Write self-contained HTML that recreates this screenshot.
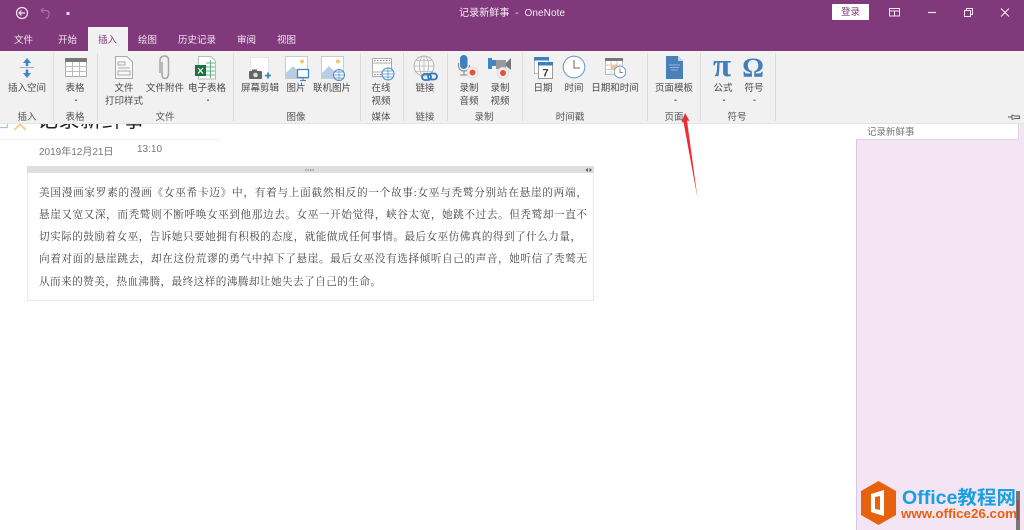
<!DOCTYPE html>
<html><head><meta charset="utf-8"><style>
html,body{margin:0;padding:0;width:1024px;height:530px;overflow:hidden;background:#fff}
body{position:relative;font-family:"Liberation Sans","Noto Sans CJK SC",sans-serif;font-size:9.5px;color:#444;filter:blur(.3px)}
div{position:absolute;white-space:nowrap}
.c{transform:translateX(-50%);line-height:13px;color:#4a4a4a;text-align:center}
.t{top:35px;line-height:12px;color:#f3e6f1}
.s{width:1px;top:53px;height:68px;background:#dcdcdc}
.g{top:112px;color:#555;line-height:12px}
.l{left:39px;width:548px;font-family:"Liberation Serif","Noto Serif CJK SC",serif;font-size:10.6px;line-height:14px;color:#444;text-align:justify;text-align-last:justify;white-space:normal;height:14px}
svg{position:absolute;left:0;top:0}
</style></head><body>

<div style="left:0;top:124px;width:856px;height:406px;background:#fff"></div>
<div style="left:37px;top:106px;font-size:21px;line-height:30px;color:#222;letter-spacing:.6px">记录新鲜事</div>
<div style="left:0;top:139px;width:220px;height:1px;background:#f0f0f0"></div>
<div style="left:39px;top:147px;font-size:10px;line-height:12px;color:#777">2019年12月21日</div>
<div style="left:137px;top:144px;font-size:10px;line-height:12px;color:#777">13:10</div>

<div style="left:27px;top:166px;width:565px;height:134px;border:1px solid #e8e8e8;border-top:0;background:#fff"></div>
<div style="left:27px;top:166px;width:567px;height:7px;background:#dedede"></div>
<div class="l" style="top:187px">美国漫画家罗素的漫画《女巫希卡迈》中，有着与上面截然相反的一个故事:女巫与秃鹫分别站在悬崖的两端，</div>
<div class="l" style="top:209px">悬崖又宽又深，而秃鹫则不断呼唤女巫到他那边去。女巫一开始觉得，峡谷太宽，她跳不过去。但秃鹫却一直不</div>
<div class="l" style="top:231px;width:542px">切实际的鼓励着女巫，告诉她只要她拥有积极的态度，就能做成任何事情。最后女巫仿佛真的得到了什么力量，</div>
<div class="l" style="top:253px">向着对面的悬崖跳去，却在这份荒谬的勇气中掉下了悬崖。最后女巫没有选择倾听自己的声音，她听信了秃鹫无</div>
<div class="l" style="top:276px;width:342px">从而来的赞美，热血沸腾，最终这样的沸腾却让她失去了自己的生命。</div>

<div style="left:856px;top:124px;width:168px;height:406px;background:#f3e5f3"></div>
<div style="left:856px;top:140px;width:1px;height:390px;background:#dcc5e0"></div>
<div style="left:856px;top:124px;width:163px;height:16px;background:#fff;border-bottom:1px solid #e6d3e8;border-right:1px solid #e6d3e8;box-sizing:border-box"></div>
<div style="left:867px;top:127px;line-height:12px;color:#777">记录新鲜事</div>

<div style="left:0;top:0;width:1024px;height:51px;background:#80397b"></div>
<div style="left:0;top:51px;width:1024px;height:72px;background:#f1f1f1"></div>
<div style="left:0;top:123px;width:1024px;height:1px;background:#e4e4e4"></div>
<div style="left:88px;top:27px;width:40px;height:24px;background:#f1f1f1"></div>

<div style="left:459px;top:7px;line-height:13px;font-size:10px;color:#f5ecf4;letter-spacing:.1px">记录新鲜事&nbsp; - &nbsp;OneNote</div>
<div style="left:832px;top:4px;width:37px;height:16px;background:#fff;border-radius:1px;text-align:center;line-height:18px;color:#80397b">登录</div>

<div class="t" style="left:14px">文件</div>
<div class="t" style="left:58px">开始</div>
<div class="t" style="left:98px;color:#80397b">插入</div>
<div class="t" style="left:138px">绘图</div>
<div class="t" style="left:178px">历史记录</div>
<div class="t" style="left:237px">审阅</div>
<div class="t" style="left:277px">视图</div>

<div class="s" style="left:53px"></div><div class="s" style="left:97px"></div><div class="s" style="left:233px"></div><div class="s" style="left:360px"></div><div class="s" style="left:403px"></div><div class="s" style="left:447px"></div><div class="s" style="left:522px"></div><div class="s" style="left:647px"></div><div class="s" style="left:700px"></div><div class="s" style="left:775px"></div>

<div class="c" style="left:27px;top:82px">插入空间</div>
<div class="c" style="left:75px;top:82px">表格</div>
<div class="c" style="left:124px;top:82px">文件<br>打印样式</div>
<div class="c" style="left:165px;top:82px">文件附件</div>
<div class="c" style="left:207px;top:82px">电子表格</div>
<div class="c" style="left:260px;top:82px">屏幕剪辑</div>
<div class="c" style="left:296px;top:82px">图片</div>
<div class="c" style="left:332px;top:82px">联机图片</div>
<div class="c" style="left:381px;top:82px">在线<br>视频</div>
<div class="c" style="left:425px;top:82px">链接</div>
<div class="c" style="left:469px;top:82px">录制<br>音频</div>
<div class="c" style="left:500px;top:82px">录制<br>视频</div>
<div class="c" style="left:543px;top:82px">日期</div>
<div class="c" style="left:574px;top:82px">时间</div>
<div class="c" style="left:615px;top:82px">日期和时间</div>
<div class="c" style="left:674px;top:82px">页面模板</div>
<div class="c" style="left:723px;top:82px">公式</div>
<div class="c" style="left:754px;top:82px">符号</div>

<div class="c g" style="left:27px">插入</div>
<div class="c g" style="left:75px">表格</div>
<div class="c g" style="left:165px">文件</div>
<div class="c g" style="left:296px">图像</div>
<div class="c g" style="left:381px">媒体</div>
<div class="c g" style="left:425px">链接</div>
<div class="c g" style="left:484px">录制</div>
<div class="c g" style="left:570px">时间戳</div>
<div class="c g" style="left:674px">页面</div>
<div class="c g" style="left:737px">符号</div>

<svg width="1024" height="530" viewBox="0 0 1024 530" fill="none">
<!-- title bar -->
<circle cx="22" cy="13" r="5.5" stroke="#f3e6f1" stroke-width="1.2"/>
<path d="M25 13H19M21.5 10.5L19 13L21.5 15.5" stroke="#f3e6f1" stroke-width="1.2"/>
<path d="M41 10.5H46Q50 11 49 15T45.5 18M41 10.5L43.5 8M41 10.5L43.5 13" stroke="#a673a2" stroke-width="1.2"/>
<rect x="66.5" y="12" width="3" height="3" fill="#ecdcea"/>
<rect x="889.5" y="8.5" width="10" height="7.5" stroke="#f3e6f1"/><path d="M889 11H900M894.5 11V16" stroke="#f3e6f1"/>
<path d="M928 12.5H936" stroke="#f3e6f1" stroke-width="1.2"/>
<rect x="964.5" y="10.5" width="6" height="6" stroke="#f3e6f1"/><path d="M966.5 10V8.5H972.5V14.5H971" stroke="#f3e6f1"/>
<path d="M1001 8.5L1009 16.5M1009 8.5L1001 16.5" stroke="#f3e6f1" stroke-width="1.1"/>

<!-- insert space -->
<path d="M27 58L31 63H28.3V66H25.7V63H23Z" fill="#3f86c6"/><path d="M20 67.5H34" stroke="#aaa"/><path d="M27 78L31 73H28.3V69.5H25.7V73H23Z" fill="#3f86c6"/>
<!-- table -->
<rect x="65.5" y="58.5" width="21" height="18" fill="#fff" stroke="#aaa"/><rect x="65" y="58" width="22" height="4" fill="#777"/>
<path d="M65 66.5H87M65 71.5H87M72.5 62V77M79.5 62V77" stroke="#bbb"/>
<!-- printout -->
<path d="M115.5 56.5H127L132.5 62V78.5H115.5Z" fill="#f8f8f8" stroke="#aaa"/><path d="M118 62H125V65H118ZM118 68H130M118 71H130V75H118Z" stroke="#aaa"/>
<!-- clip -->
<path d="M162 62V74Q162 78.500 165 78.500T168.500 74V60Q168.500 56 164.500 56T160 60V73" stroke="#a6a6a6" stroke-width="1.500"/>
<!-- excel -->
<path d="M198.5 56.5H211L215.5 61V79H198.5Z" fill="#fff" stroke="#bbb"/><path d="M206 63H215M206 67H215M206 71H215M206 75H215M210.5 60V78" stroke="#5fb57f"/>
<rect x="195" y="65" width="11" height="11" fill="#1d7044"/><path d="M198 68L203 73.5M203 68L198 73.5" stroke="#fff" stroke-width="1.2"/>
<!-- screen clip -->
<rect x="250.500" y="57.500" width="18" height="18" fill="#fff" stroke="#e6e6e6"/>
<rect x="249" y="71" width="13" height="8" rx="1" fill="#666"/><rect x="252" y="69.500" width="5" height="2" fill="#666"/><circle cx="255.500" cy="75" r="2.300" fill="#ddd"/>
<path d="M268 72.500V78.500M265 75.500H271" stroke="#3f86c6" stroke-width="1.800"/>
<!-- picture -->
<rect x="285.500" y="56.500" width="22" height="22" fill="#fff" stroke="#ccc"/><path d="M286 78V73L293 66L299 72L302 70V78Z" fill="#b7cfe5"/><circle cx="302" cy="61.500" r="2" fill="#f2c777"/>
<rect x="297.500" y="69.500" width="11" height="8" fill="#fff" stroke="#3f86c6" stroke-width="1.300"/><path d="M303 78V80.500M300 80.500H306" stroke="#3f86c6"/>
<!-- online picture -->
<rect x="321.500" y="56.500" width="22" height="22" fill="#fff" stroke="#ccc"/><path d="M322 78V73L329 66L335 72L338 70V78Z" fill="#b7cfe5"/><circle cx="338" cy="61.500" r="2" fill="#f2c777"/>
<circle cx="339" cy="75" r="5.500" fill="#fff" stroke="#4a8cc7"/><path d="M333.500 75H344.500M339 69.500V80.500M334.500 72H343.500M334.500 78H343.500" stroke="#4a8cc7" stroke-width=".7"/>
<!-- video online -->
<rect x="372.500" y="58.500" width="19" height="18" fill="#fff" stroke="#aaa"/><path d="M372 63H392M372 72H392" stroke="#aaa"/><path d="M374 60.500H390M374 74.500H384" stroke="#888" stroke-dasharray="1.500 1.500"/>
<circle cx="388" cy="74" r="6" fill="#fff" stroke="#4a8cc7"/><path d="M382 74H394M388 68V80M383 71H393M383 77H393" stroke="#4a8cc7" stroke-width=".7"/>
<!-- link -->
<circle cx="424" cy="66" r="10" fill="#f8f8f8" stroke="#b5b5b5"/><path d="M414 66H434M424 56V76M416 60.500H432M416 71.500H432" stroke="#b5b5b5" stroke-width=".8"/><ellipse cx="424" cy="66" rx="4.500" ry="10" stroke="#b5b5b5" stroke-width=".8"/>
<rect x="422" y="74" width="9" height="6" rx="3" stroke="#2f78bd" stroke-width="1.800"/><rect x="428" y="73.500" width="9" height="6" rx="3" stroke="#2f78bd" stroke-width="1.800"/>
<!-- mic -->
<rect x="460" y="55" width="7.500" height="14" rx="3.700" fill="#3f7fbb"/><path d="M458.500 63V65Q458.500 71 464 71T469.500 65M464 71V74.500M460 75H468" stroke="#888" stroke-width="1.100"/>
<circle cx="472.500" cy="72.500" r="5.500" fill="#f4f4f4" stroke="#ddd"/><circle cx="472.500" cy="72.500" r="3" fill="#e0532f"/>
<!-- cam -->
<path d="M488 58H492V60H504V66H492V69H488Z" fill="#3f86c6"/><path d="M496 60H506V69H496Z" fill="#9a9a9a"/><path d="M506 63L511 58V70L506 66Z" fill="#777"/>
<circle cx="503" cy="73" r="5.500" fill="#f4f4f4" stroke="#ddd"/><circle cx="503" cy="73" r="3" fill="#e0532f"/>
<!-- date -->
<rect x="534.500" y="57.500" width="14" height="16" fill="#fff" stroke="#bbb"/><rect x="534" y="57" width="15" height="3.500" fill="#3f7fbb"/>
<rect x="538.500" y="62.500" width="14" height="16" fill="#fff" stroke="#999"/><rect x="538" y="62" width="15" height="3.500" fill="#3f7fbb"/>
<text x="545.500" y="76.500" font-family="Liberation Sans,sans-serif" font-size="11" font-weight="bold" fill="#444" text-anchor="middle">7</text>
<!-- clock -->
<circle cx="574" cy="67" r="10.800" fill="#fff" stroke="#6f9fcc" stroke-width="1.100"/><path d="M574 60V68H580" stroke="#666" stroke-width="1"/>
<!-- datetime -->
<rect x="605.500" y="58.500" width="17" height="16" fill="#fff" stroke="#bbb"/><rect x="605" y="58" width="18" height="3" fill="#777"/><path d="M605 65H623M605 69.500H623M611 61V75M617 61V75" stroke="#ccc"/><rect x="611" y="65" width="6" height="4.500" fill="#f2c38f"/>
<circle cx="620" cy="72" r="5.800" fill="#fff" stroke="#6f9fcc"/><path d="M620 68.500V72.500H623" stroke="#666" stroke-width=".8"/>
<!-- page template -->
<path d="M666 56H678L683 61V79H666Z" fill="#4a80b8"/><path d="M678 56V61H683Z" fill="#bcd2e8"/><path d="M669 65H680M670 67.500H679M671 70H678" stroke="#a9c5e0" stroke-width=".8"/>
<!-- pi omega -->
<text x="722" y="76" font-family="Liberation Serif,serif" font-size="33" font-weight="bold" fill="#3f7fbb" text-anchor="middle">π</text>
<text x="753" y="76.500" font-family="Liberation Serif,serif" font-size="27" font-weight="bold" fill="#3f7fbb" text-anchor="middle">Ω</text>
<!-- dropdowns -->
<path d="M75 99.500H77V101H75ZM207 99.500H209V101H207ZM674.500 99.500H676.500V101H674.500ZM723 99.500H725V101H723ZM753.500 99.500H755.500V101H753.500Z" fill="#777"/>
<!-- pin -->
<path d="M1008 117H1012M1012 114.500V119.500M1012 115L1015 116H1019.500V118.500H1015L1012 119.500" stroke="#555" stroke-width=".9"/>
<!-- page icons -->
<path d="M0 127.500H7.500V124" stroke="#a8c4e0" stroke-width="1.200"/><path d="M14 130L20 124.500L26 130" stroke="#f0cf8c" stroke-width="1.800"/>
<!-- handle -->
<path d="M305 170H315" stroke="#777" stroke-dasharray="1.500 1"/><path d="M588 168V172L585.500 170ZM589.500 168V172L592 170Z" fill="#555"/>
<!-- red arrow -->
<path d="M685 113L689.500 121L687 120.500L697.500 198L683.500 122L681.500 122.500Z" fill="#ee2b33"/>
<!-- watermark -->
<path d="M878.500 481L896 491V515L878.500 525L861 515V491Z" fill="#e8610e"/>
<path d="M871 494L884 490V516L871 512ZM875 497V509L880 510V496Z" fill="#fff"/>
<text x="902" y="504" font-family="Liberation Sans,Noto Sans CJK SC,sans-serif" font-size="19" font-weight="bold" fill="#1a9fe3" textLength="114" lengthAdjust="spacingAndGlyphs">Office教程网</text>
<text x="901" y="518" font-family="Liberation Sans,sans-serif" font-size="13" font-weight="bold" fill="#e8610e" textLength="116" lengthAdjust="spacingAndGlyphs">www.office26.com</text>
<path d="M1018 491V530" stroke="#777" stroke-width="4"/><path d="M1018 500V520" stroke="#a5413f" stroke-width="1.500"/>
</svg>
</body></html>
